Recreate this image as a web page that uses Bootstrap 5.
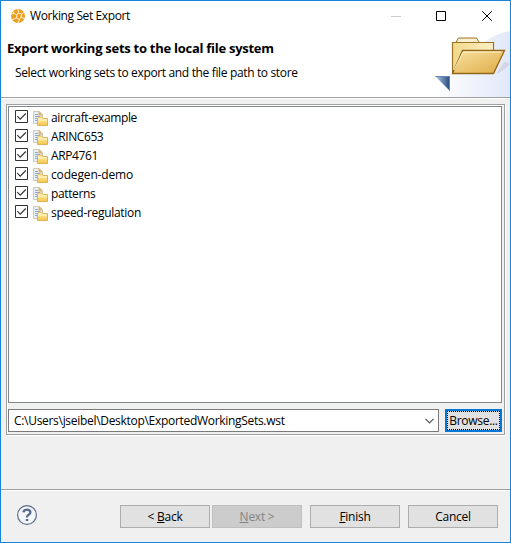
<!DOCTYPE html>
<html lang="en">
<head>
<meta charset="utf-8">
<meta name="viewport" content="width=device-width, initial-scale=1">
<title>Working Set Export</title>
<link rel="stylesheet" href="https://cdn.jsdelivr.net/npm/bootstrap@5.3.0/dist/css/bootstrap.min.css">
<style>
body{font:12px/16px "Open Sans","Noto Sans",sans-serif;color:#000;letter-spacing:-.3px;overflow:hidden}
svg{display:block;flex:none}
.dialog{width:511px;height:543px;border:1px solid #1883d7;background:#f0f0f0}
.titlebar{height:29px;padding:0 0 0 9px}
.caption{margin-left:4px;letter-spacing:-.39px}
.banner{height:68px;border-bottom:1px solid #a0a0a0;box-shadow:0 1px #fff;padding-left:6px}
.banner-art{width:76px;height:67px}
.heading{font-size:13px;line-height:18px;font-weight:700;margin:9px 0 0;letter-spacing:-.27px}
.subtitle{margin:8px 0 0 8px;letter-spacing:-.35px}
.group-frame{margin:6px 5px 0;height:331px;border:1px solid #a0a0a0;box-shadow:inset 1px 1px #fff,1px 1px #fff;padding:1px}
.set-list{height:297px;border:1px solid #828790;background:#fff;padding:1px 0 0 6px;margin-right:1px}
.set-row{height:19px}
.set-row .check{margin-top:-2px}
.set-row .icon{margin:2px 3px 0 5px}
.set-row .tight{letter-spacing:-.38px}
.set-row .caps{letter-spacing:-.4px}
.set-row .wide{letter-spacing:-.15px}
.path-row{margin-top:6px;height:23px}
.combo{width:431px;border:1px solid #7a7a7a;background:#fff;padding:0 4px 0 5px}
.btn.push{--bs-btn-padding-x:0;--bs-btn-padding-y:0;--bs-btn-font-size:12px;--bs-btn-line-height:18px;--bs-btn-border-radius:0;--bs-btn-color:#000;--bs-btn-bg:#e1e1e1;--bs-btn-border-color:#adadad;--bs-btn-disabled-bg:#ccc;--bs-btn-disabled-border-color:#bfbfbf;--bs-btn-disabled-color:#838383;--bs-btn-disabled-opacity:1;width:90px;height:23px;padding:1px 0 0;letter-spacing:-.25px}
.btn.browse{width:57px;border:2px solid #0078d7;outline:1px dotted #000;outline-offset:-3px;line-height:17px;margin-right:1px;padding:0;letter-spacing:-.3px}
.footer-bar{margin-top:54px;border-top:1px solid #a0a0a0;box-shadow:inset 0 1px #fff;height:53px;padding:15px 12px 0 15px}
</style>
<script src="https://cdn.jsdelivr.net/npm/bootstrap@5.3.0/dist/js/bootstrap.bundle.min.js"></script>
</head>
<body>
<svg width="0" height="0" class="position-absolute" aria-hidden="true">
<defs>
<linearGradient id="gold" x2="0" y2="1"><stop stop-color="#fff4b8"/><stop offset="1" stop-color="#f5c54a"/></linearGradient>
<symbol id="check" viewBox="0 0 13 13"><path fill="#fff" stroke="#333" d="M.5.5h12v12H.5z"/><path fill="none" stroke="#333" stroke-width="1.1" d="M2.3 6.2l2.9 3L10.8 3.5"/></symbol>
<symbol id="set" viewBox="0 0 15 15">
<path fill="#e9eff9" stroke="#c9c5ae" stroke-width=".9" d="M.5.5h6l3 3v9h-9z"/><path fill="#dcb56b" d="M5.500 0L10 4.500H5.500z"/>
<path stroke="#8fa6cf" d="M2 3.5h3M2 5.5h5M2 7.5h3M2 9.5h3"/>
<path fill="url(#gold)" stroke="#d9ab4c" stroke-width=".9" d="M4.5 14.500V7.300l1-1.3h3.500l1 1.500h4.500v7z"/><path stroke="#fff6cd" d="M5 9h9"/></symbol>
</defs></svg>
<main class="dialog">
<header class="bg-white">
<div class="titlebar d-flex align-items-center">
<svg width="16" height="16" viewBox="0 0 16 16"><circle cx="8" cy="8" r="7" fill="#eda11b"/><g fill="none" stroke="#fff" stroke-width=".8"><path d="M1 6l3-.5L7 7l1.500-2L8 1M8.500 5l3 1L15 4M7 7l-.5 3L1 12M6.500 10l3 1.500L8 15M9.500 11.500L11 9l4 2M11 9l.5-3M4 5.500L2.500 2"/></g></svg>
<span class="caption">Working Set Export</span>
<svg class="ms-auto" width="120" height="28" viewBox="390 1 120 28" fill="none"><path stroke="#ccc" d="M391 15.500h10"/><path stroke="#000" d="M436.500 10.500h9v9h-9zM482.200 10.200l9.600 9.600M491.800 10.200l-9.600 9.600"/></svg>
</div>
<div class="banner d-flex justify-content-between">
<div><h1 class="heading">Export working sets to the local file system</h1><p class="subtitle">Select working sets to export and the file path to store</p></div>
<svg class="banner-art" viewBox="434 30 76 67">
<defs>
<linearGradient id="haze"><stop stop-color="#fff"/><stop offset="1" stop-color="#e1e8f8"/></linearGradient>
<linearGradient id="blue"><stop stop-color="#b6cbea"/><stop offset="1" stop-color="#244879"/></linearGradient>
<linearGradient id="back"><stop stop-color="#f3d889"/><stop offset="1" stop-color="#faf0c8"/></linearGradient>
<linearGradient id="front" x2="1" y2="1"><stop stop-color="#f8e3a5"/><stop offset="1" stop-color="#dfaa43"/></linearGradient>
</defs>
<path fill="url(#haze)" d="M434 97q10-10 15-23l31-28q12-12 30-15v66z"/>
<path fill="#c7bfd2" opacity=".5" d="M496 74l8-12q6 0 5 3-4 5-13 9z"/>
<path fill="#fbf1d1" stroke="#9c7425" d="M455.500 43l3-5h18l3 5"/>
<path fill="url(#back)" stroke="#9c7425" stroke-width="1.200" d="M452.500 73V42.500h41V73z"/>
<path fill="url(#front)" stroke="#926719" stroke-width="1.300" d="M462.500 50.500h42L493.500 73.500h-41z"/>
<path fill="none" stroke="#fff5cf" d="M463.500 52h38M463 52l-9 18"/>
<path fill="url(#blue)" d="M435 76h15v15z"/><path fill="none" stroke="#6683b4" d="M435.500 76.500h14v14"/>
</svg>
</div>
</header>
<section class="group-frame">
<div class="set-list">
<div class="set-row d-flex align-items-center"><svg class="check" width="13" height="13"><use href="#check"/></svg><svg class="icon" width="15" height="15"><use href="#set"/></svg><span class="tight">aircraft-example</span></div>
<div class="set-row d-flex align-items-center"><svg class="check" width="13" height="13"><use href="#check"/></svg><svg class="icon" width="15" height="15"><use href="#set"/></svg><span class="caps">ARINC653</span></div>
<div class="set-row d-flex align-items-center"><svg class="check" width="13" height="13"><use href="#check"/></svg><svg class="icon" width="15" height="15"><use href="#set"/></svg><span class="caps">ARP4761</span></div>
<div class="set-row d-flex align-items-center"><svg class="check" width="13" height="13"><use href="#check"/></svg><svg class="icon" width="15" height="15"><use href="#set"/></svg><span class="wide">codegen-demo</span></div>
<div class="set-row d-flex align-items-center"><svg class="check" width="13" height="13"><use href="#check"/></svg><svg class="icon" width="15" height="15"><use href="#set"/></svg><span class="tight">patterns</span></div>
<div class="set-row d-flex align-items-center"><svg class="check" width="13" height="13"><use href="#check"/></svg><svg class="icon" width="15" height="15"><use href="#set"/></svg><span>speed-regulation</span></div>
</div>
<div class="path-row d-flex">
<div class="combo d-flex align-items-center justify-content-between"><span>C:\Users\jseibel\Desktop\ExportedWorkingSets.wst</span><svg width="9" height="6" viewBox="0 0 9 6"><path fill="none" stroke="#555" stroke-width="1.200" d="M.5.800l4 4 4-4"/></svg></div>
<button class="btn push browse ms-auto" type="button">Browse...</button>
</div>
</section>
<footer class="footer-bar d-flex">
<svg width="22" height="22" viewBox="0 0 22 22"><circle cx="11" cy="10" r="9.400" fill="#f3f5f8" stroke="#5c6d88" stroke-width="1.200"/><path fill="none" stroke="#566b8e" stroke-width="2.300" d="M7.500 7.300Q7.800 4.600 11 4.600t3.400 2.600q0 1.500-1.800 2.500T11 12.500"/><path fill="#566b8e" d="M9.800 14h2.500v2H9.800z"/></svg>
<div class="d-flex ms-auto">
<button class="btn push" type="button">&lt; <u>B</u>ack</button>
<button class="btn push" style="margin-left:2px" type="button" disabled><u>N</u>ext &gt;</button>
<button class="btn push ms-2" type="button"><u>F</u>inish</button>
<button class="btn push ms-2" type="button">Cancel</button>
</div>
</footer>
</main>
</body>
</html>
